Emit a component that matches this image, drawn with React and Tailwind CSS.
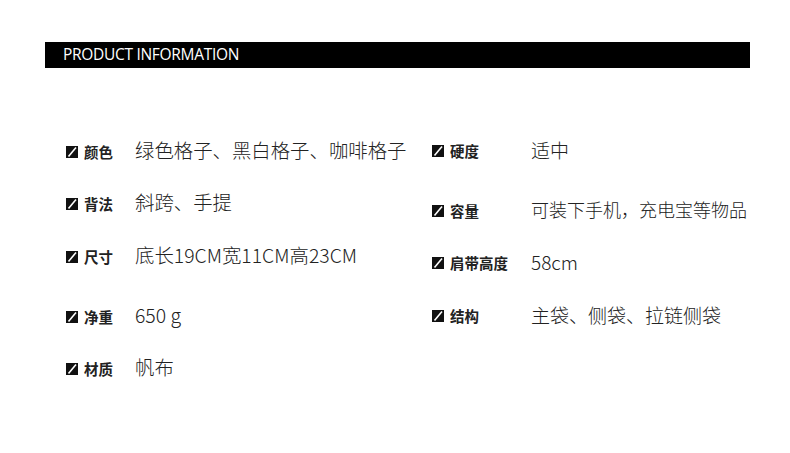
import React from 'react';

const LEFT = [
  { label: '颜色', value: '绿色格子、黑白格子、咖啡格子', mt: 'mt-[141px]' },
  { label: '背法', value: '斜跨、手提', mt: 'mt-[30px]' },
  { label: '尺寸', value: '底长19CM宽11CM高23CM', mt: 'mt-[31px]' },
  { label: '净重', value: '650 g', mt: 'mt-[38px]' },
  { label: '材质', value: '帆布', mt: 'mt-[30px]' },
];

const RIGHT = [
  { label: '硬度', value: '适中', mt: 'mt-[140px]', size: 'text-[19px]' },
  { label: '容量', value: '可装下手机，充电宝等物品', mt: 'mt-[38px]', size: 'text-[18px]' },
  { label: '肩带高度', value: '58cm', mt: 'mt-[30px]', size: 'text-[19px]' },
  { label: '结构', value: '主袋、侧袋、拉链侧袋', mt: 'mt-[31px]', size: 'text-[19px]' },
];

const valueFont = { fontFamily: '"Noto Sans CJK SC", "Noto Sans", sans-serif' };

function Mark() {
  return (
    <svg width="12" height="12" viewBox="0 0 12 12" className="shrink-0">
      <rect width="12" height="12" fill="#111" />
      <path d="M2.5 10.5 L10 1.5" stroke="#fff" strokeWidth="1.6" />
    </svg>
  );
}

export default function App() {
  return (
    <div
      className="w-[790px] h-[453px] bg-white overflow-hidden"
      style={{ fontFamily: '"Noto Sans", "Noto Sans CJK SC", sans-serif' }}
    >
      <div className="pt-[42px] pl-[45px] pr-[40px]">
        <div className="h-[26px] bg-black flex items-center pl-[18px]">
          <span
            className="text-white text-[15.5px] tracking-[-0.3px]"
            style={{ fontFamily: '"Open Sans", sans-serif' }}
          >
            PRODUCT INFORMATION
          </span>
        </div>
      </div>
      <div className="flex">
        <div className="ml-[66px] w-[366px] flex flex-col -mt-[68px]">
          {LEFT.map((r) => (
            <div key={r.label} className={`flex items-center h-[22px] ${r.mt}`}>
              <Mark />
              <span className="ml-[6px] w-[51px] text-[14.5px] font-bold text-[#222] leading-none">{r.label}</span>
              <span className="pb-[4px] text-[19.4px] font-light text-[#222] whitespace-nowrap leading-none" style={valueFont}>
                {r.value}
              </span>
            </div>
          ))}
        </div>
        <div className="flex flex-col -mt-[68px]">
          {RIGHT.map((r) => (
            <div key={r.label} className={`flex items-center h-[22px] ${r.mt}`}>
              <Mark />
              <span className="ml-[6px] w-[81px] text-[14.5px] font-bold text-[#222] leading-none">{r.label}</span>
              <span className={`pb-[4px] ${r.size} font-light text-[#222] whitespace-nowrap leading-none`} style={valueFont}>
                {r.value}
              </span>
            </div>
          ))}
        </div>
      </div>
    </div>
  );
}
